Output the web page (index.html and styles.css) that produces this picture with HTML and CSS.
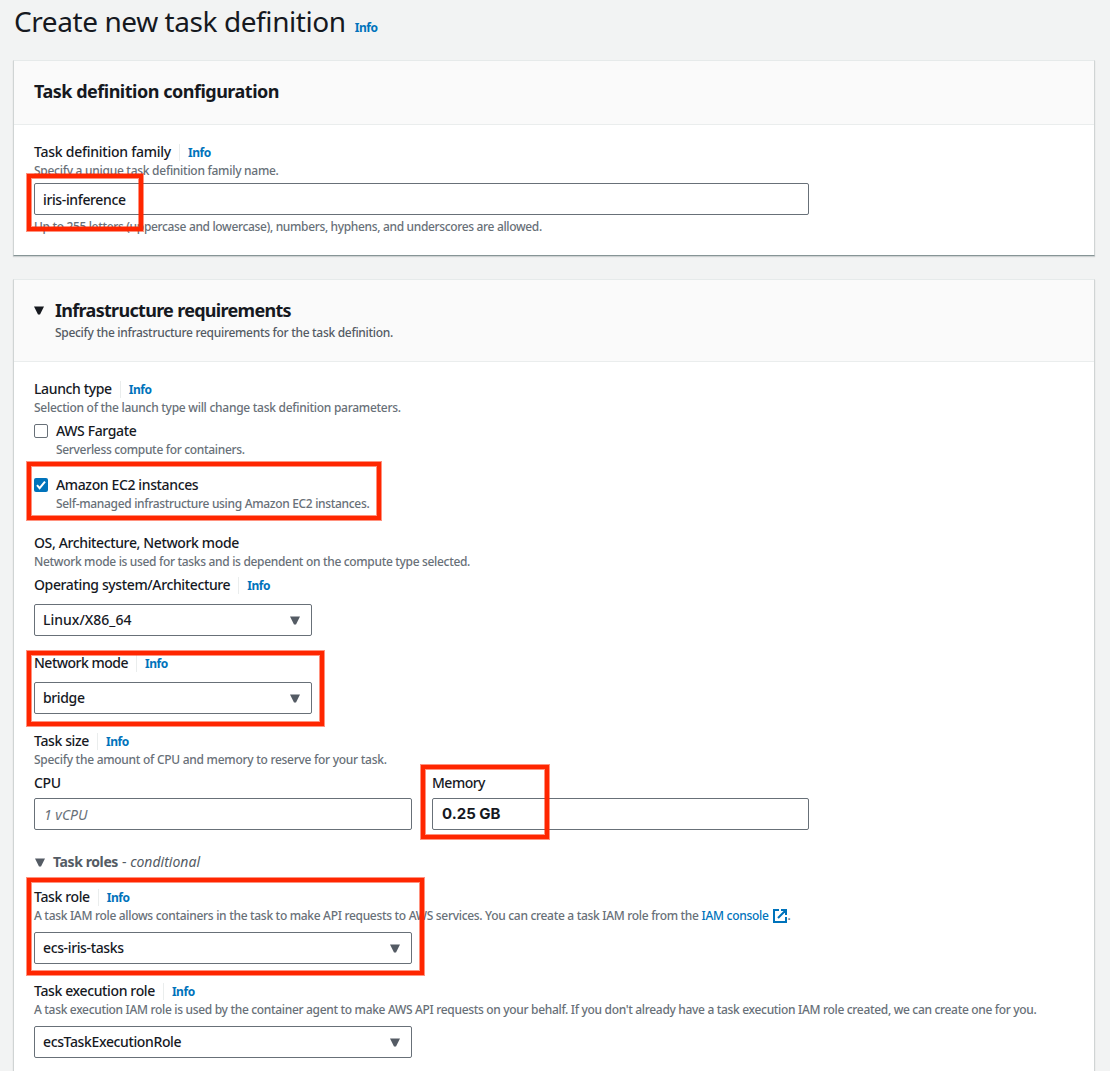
FILE: index.html
```
<!DOCTYPE html>
<html lang="en">
<head>
<meta charset="utf-8">
<title>Create new task definition</title>
<link rel="stylesheet" href="styles.css">
</head>
<body>
<main class="page">
  <header class="page-header">
    <h1 class="page-title">Create new task definition</h1>
    <a class="info">Info</a>
  </header>

  <section class="card">
    <div class="card-header"><h2 class="card-title">Task definition configuration</h2></div>
    <div class="card-body">
      <div class="label-row"><label class="label label-family">Task definition family</label><a class="info info-divided">Info</a></div>
      <p class="hint hint-loose">Specify a unique task definition family name.</p>
      <div class="control control-wide control-input gap-4"><span class="value">iris-inference</span></div>
      <p class="hint hint-below">Up to 255 letters (uppercase and lowercase), numbers, hyphens, and underscores are allowed.</p>
    </div>
  </section>

  <section class="card">
    <div class="card-header card-header-expand">
      <svg class="caret caret-dark" viewBox="0 0 10 9"><path d="M0 .5h10L6 8.6H4z"/></svg>
      <div>
        <h2 class="card-title card-title-tight">Infrastructure requirements</h2>
        <p class="hint hint-strong">Specify the infrastructure requirements for the task definition.</p>
      </div>
    </div>
    <div class="card-body">
      <div class="label-row"><span class="label">Launch type</span><a class="info info-divided">Info</a></div>
      <p class="hint hint-loose">Selection of the launch type will change task definition parameters.</p>

      <div class="check-row gap-4">
        <span class="checkbox"></span>
        <div><div class="label">AWS Fargate</div><p class="hint">Serverless compute for containers.</p></div>
      </div>
      <div class="check-row gap-16">
        <span class="checkbox checked"><svg viewBox="0 0 14 14"><path d="M3 7.2l2.6 3L11 3.6"/></svg></span>
        <div><div class="label">Amazon EC2 instances</div><p class="hint">Self-managed infrastructure using Amazon EC2 instances.</p></div>
      </div>

      <div class="label-row gap-20"><span class="label">OS, Architecture, Network mode</span></div>
      <p class="hint">Network mode is used for tasks and is dependent on the compute type selected.</p>
      <div class="label-row gap-4"><span class="label">Operating system/Architecture</span><a class="info info-divided">Info</a></div>
      <div class="control control-small gap-8"><span class="value value-plain">Linux/X86_64</span><svg class="caret" viewBox="0 0 10 9"><path d="M0 .5h10L6 8.6H4z"/></svg></div>

      <div class="label-row gap-16"><span class="label label-tight">Network mode</span><a class="info info-divided">Info</a></div>
      <div class="control control-small gap-8"><span class="value">bridge</span><svg class="caret" viewBox="0 0 10 9"><path d="M0 .5h10L6 8.6H4z"/></svg></div>

      <div class="label-row gap-16"><span class="label">Task size</span><a class="info info-divided">Info</a></div>
      <p class="hint hint-loose">Specify the amount of CPU and memory to reserve for your task.</p>
      <div class="size-grid gap-4">
        <div><div class="label">CPU</div><div class="control control-input gap-4"><span class="value placeholder">1 vCPU</span></div></div>
        <div><div class="label label-tight">Memory</div><div class="control gap-4"><span class="value memory">0.25 GB</span></div></div>
      </div>

      <div class="expander"><svg class="caret" viewBox="0 0 10 9"><path d="M0 .5h10L6 8.6H4z"/></svg><b class="expander-title">Task roles</b><span class="expander-note">- <i>conditional</i></span></div>

      <div class="label-row gap-12"><span class="label">Task role</span><a class="info info-divided">Info</a></div>
      <p class="hint hint-link">A task IAM role allows containers in the task to make API requests to AWS services. You can create a task IAM role from the <a class="link">IAM console</a><svg class="external" viewBox="0 0 14 14"><path d="M6 1H1v12h12V8M8 1h5v5M13 1L5 9"/></svg>.</p>
      <div class="control control-medium gap-8"><span class="value">ecs-iris-tasks</span><svg class="caret" viewBox="0 0 10 9"><path d="M0 .5h10L6 8.6H4z"/></svg></div>

      <div class="label-row gap-16"><span class="label">Task execution role</span><a class="info info-divided">Info</a></div>
      <p class="hint">A task execution IAM role is used by the container agent to make AWS API requests on your behalf. If you don't already have a task execution IAM role created, we can create one for you.</p>
      <div class="control control-medium gap-8"><span class="value">ecsTaskExecutionRole</span><svg class="caret" viewBox="0 0 10 9"><path d="M0 .5h10L6 8.6H4z"/></svg></div>
    </div>
  </section>

  <div class="mark mark-family"></div>
  <div class="mark mark-ec2"></div>
  <div class="mark mark-network"></div>
  <div class="mark mark-memory"></div>
  <div class="mark mark-role"></div>
</main>
</body>
</html>
```
FILE: styles.css
```
* { box-sizing: border-box; }

body {
  margin: 0;
  background: #f2f3f3;
  color: #16191f;
  font: 500 14px/22px "Noto Sans", "Open Sans", sans-serif;
  overflow: hidden;
}

h1, h2, p { margin: 0; }

.page {
  position: relative;
  height: 1071px;
  padding: 0 15px 0 13px;
  overflow: hidden;
}

.page-header {
  display: flex;
  align-items: baseline;
  gap: 9px;
  height: 60px;
  padding: 3px 0 0 1px;
}

.page-title {
  font-size: 28px;
  font-weight: 400;
  line-height: 36px;
  letter-spacing: -0.42px;
}

.info {
  color: #0073bb;
  font-size: 12px;
  font-weight: 700;
  line-height: 16px;
  letter-spacing: -0.45px;
}

.card {
  margin-bottom: 23px;
  background: #fff;
  border: 1px solid #d0d4d4;
  border-top-color: #e6eaea;
  border-bottom-color: #879596;
  box-shadow: 0 1px 1px rgba(0, 28, 36, 0.15);
}

.card-header {
  padding: 18px 20px 20px;
  background: #fafafa;
  border-bottom: 1px solid #eaeded;
}

.card-title {
  font-size: 18px;
  font-weight: 700;
  line-height: 25px;
  letter-spacing: -0.49px;
}

.card-title-tight { letter-spacing: -0.7px; }

.card-header-expand {
  display: flex;
  gap: 11px;
}

.card-header-expand .caret { margin-top: 8px; }
.card-header-expand .hint { margin-top: 2px; }

.card-body { padding: 16px 20px 20px; }

.label-row {
  display: flex;
  align-items: center;
  height: 22px;
}

.label, .value {
  display: block;
  line-height: 22px;
  letter-spacing: -0.37px;
}

.label-family { letter-spacing: -0.25px; }
.label-tight { letter-spacing: -0.5px; }

.info-divided {
  height: 17px;
  margin-left: 8px;
  padding-left: 8px;
  border-left: 1px solid #eaeded;
  line-height: 18px;
}

.hint {
  color: #687078;
  font-size: 12px;
  line-height: 16px;
  letter-spacing: -0.325px;
  white-space: nowrap;
}

.hint-loose { letter-spacing: -0.275px; }
.hint-below { margin-top: 4px; letter-spacing: -0.345px; }
.hint-strong { color: #545b64; letter-spacing: -0.3px; }

.control {
  display: flex;
  align-items: center;
  justify-content: space-between;
  height: 32px;
  padding: 0 11px 0 8px;
  background: #fff;
  border: 1px solid #687078;
  border-radius: 2px;
}

.control-wide { width: 775px; }
.control-small { width: 278px; }
.control-medium { width: 378px; }
.control-input { padding-top: 2px; }

.value-plain { letter-spacing: 0; }

.placeholder {
  padding-left: 1px;
  color: #687078;
  font-weight: 400;
  font-style: italic;
  letter-spacing: 0;
}

.memory {
  padding-left: 1px;
  font: 700 15px/22px Inter, sans-serif;
  letter-spacing: 0;
}

.caret {
  flex: none;
  width: 10px;
  height: 9px;
  fill: #545b64;
}

.caret-dark { fill: #16191f; }

.check-row {
  display: flex;
  gap: 8px;
}

.checkbox {
  width: 14px;
  height: 14px;
  margin-top: 4px;
  border: 1px solid #687078;
  border-radius: 2px;
  background: #fff;
}

.checked {
  border: 0;
  background: #0073bb;
}

.checked svg {
  display: block;
  fill: none;
  stroke: #fff;
  stroke-width: 2;
}

.size-grid {
  display: grid;
  grid-template-columns: 378px 377px;
  column-gap: 20px;
}

.expander {
  display: flex;
  align-items: center;
  height: 22px;
  margin-top: 21px;
  padding-left: 1px;
  color: #545b64;
}

.expander-title {
  margin: 0 4px 0 8px;
  letter-spacing: -0.4px;
}

.expander-note { font-weight: 400; letter-spacing: 0; }

.gap-12 { margin-top: 13px; }

.hint-link { display: flex; letter-spacing: -0.31px; }
.link { margin-left: 3px; color: #0073bb; }

.external {
  width: 14px;
  height: 14px;
  margin: 1px 0 0 5px;
  fill: none;
  stroke: #0073bb;
  stroke-width: 2;
}

.gap-4 { margin-top: 4px; }
.gap-8 { margin-top: 8px; }
.gap-16 { margin-top: 16px; }
.gap-20 { margin-top: 20px; }

/* Highlight frames laid over the form */
.mark {
  position: absolute;
  border: 4px solid #ff2600;
  box-shadow: 0 0 0 1px rgba(255, 38, 0, 0.5), inset 0 0 0 1px rgba(255, 38, 0, 0.5);
}

.mark-family { left: 27px; top: 174px; width: 116px; height: 57px; }
.mark-ec2 { left: 27px; top: 462px; width: 354px; height: 58px; }
.mark-network { left: 27px; top: 651px; width: 297px; height: 75px; }
.mark-memory { left: 421px; top: 765px; width: 128px; height: 74px; }
.mark-role { left: 27px; top: 878px; width: 397px; height: 97px; }
```
